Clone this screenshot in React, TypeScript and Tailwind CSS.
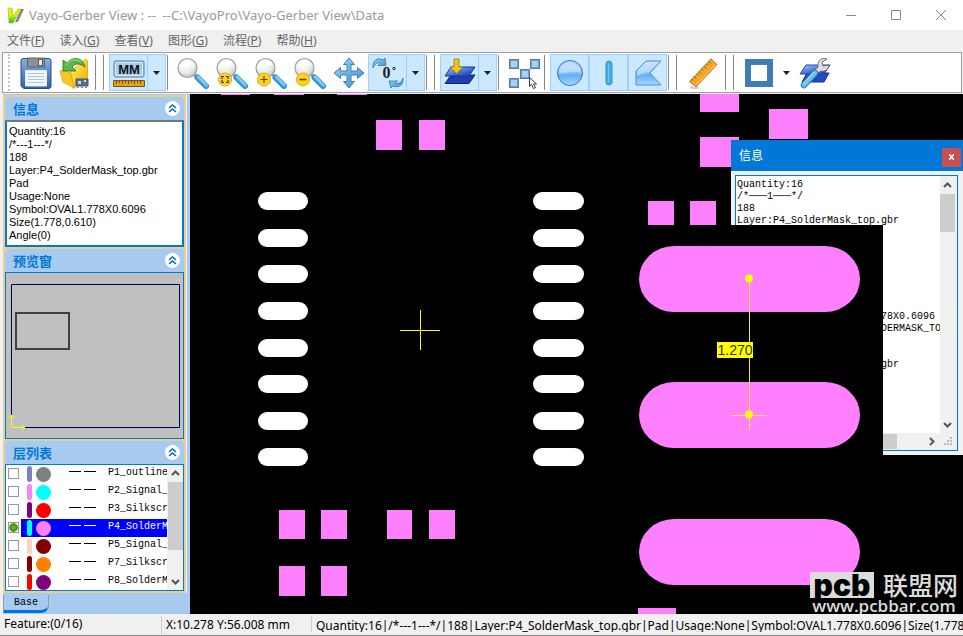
import type { ReactNode } from "react";

const menus = [
  { label: "文件", key: "F" },
  { label: "读入", key: "G" },
  { label: "查看", key: "V" },
  { label: "图形", key: "G" },
  { label: "流程", key: "P" },
  { label: "帮助", key: "H" },
];

const layers = [
  { name: "P1_outline", bar: "bg-[#8080c0]", dot: "bg-[#808080]" },
  { name: "P2_Signal_", bar: "bg-[#ff80ff]", dot: "bg-[#00ffff]" },
  { name: "P3_Silkscr", bar: "bg-[#800080]", dot: "bg-[#ff0000]" },
  { name: "P4_SolderM", bar: "bg-[#00ffff]", dot: "bg-[#ff80ff]", selected: true },
  { name: "P5_Signal_", bar: "bg-[#ffd0c4]", dot: "bg-[#800000]" },
  { name: "P7_Silkscr", bar: "bg-[#800000]", dot: "bg-[#ff8000]" },
  { name: "P8_SolderM", bar: "bg-[#ff0000]", dot: "bg-[#800080]" },
];

const featureInfo = `Quantity:16
/*---1---*/
188
Layer:P4_SolderMask_top.gbr
Pad
Usage:None
Symbol:OVAL1.778X0.6096
Size(1.778,0.610)
Angle(0)`;

const indent = " ".repeat(24);
const dialogInfo = [
  "Quantity:16",
  "/*───1───*/",
  "188",
  "Layer:P4_SolderMask_top.gbr",
  "",
  "",
  "",
  "",
  "",
  "",
  "",
  indent + "78X0.6096",
  indent + "DERMASK_TO",
  "",
  "",
  indent + "gbr",
].join("\n");

// pads on the canvas: x, y, width, height
const pads = [
  [31, 0, 29, 1],
  [84, 0, 30, 1],
  [147, 0, 30, 1],
  [186, 26, 26, 30],
  [229, 26, 26, 30],
  [89, 416, 26, 29],
  [131, 416, 26, 29],
  [197, 416, 25, 29],
  [239, 416, 26, 29],
  [89, 472, 26, 30],
  [131, 472, 26, 30],
  [458, 107, 26, 24],
  [500, 107, 26, 24],
  [510, 0, 39, 18],
  [579, 15, 39, 30],
  [510, 43, 39, 30],
];

const pinRows = [98, 135, 171, 208, 245, 281, 318, 354];

function Gradients() {
  return (
    <svg width="0" height="0" className="absolute" aria-hidden="true">
      <defs>
        <linearGradient id="steel" x1="0" y1="0" x2="0" y2="1">
          <stop offset="0" stopColor="#86b0de" />
          <stop offset="1" stopColor="#2f62a8" />
        </linearGradient>
        <linearGradient id="sky" x1="0" y1="0" x2="0" y2="1">
          <stop offset="0" stopColor="#b9dcfc" />
          <stop offset="0.45" stopColor="#8cc4fa" />
          <stop offset="0.6" stopColor="#66aff6" />
          <stop offset="1" stopColor="#a4d8ff" />
        </linearGradient>
        <linearGradient id="arrow" x1="0" y1="0" x2="1" y2="1">
          <stop offset="0" stopColor="#9cd4f4" />
          <stop offset="1" stopColor="#3d8fcb" />
        </linearGradient>
        <linearGradient id="gold" x1="0" y1="0" x2="1" y2="1">
          <stop offset="0" stopColor="#fff0a0" />
          <stop offset="0.5" stopColor="#fbd02c" />
          <stop offset="1" stopColor="#e8a80a" />
        </linearGradient>
        <linearGradient id="sheet" x1="0" y1="0" x2="1" y2="1">
          <stop offset="0" stopColor="#a8cbff" />
          <stop offset="0.6" stopColor="#3a68d4" />
          <stop offset="1" stopColor="#1b3cb0" />
        </linearGradient>
        <linearGradient id="logo" x1="0" y1="0" x2="0" y2="1">
          <stop offset="0" stopColor="#ffee00" />
          <stop offset="0.500" stopColor="#d8ea10" />
          <stop offset="1" stopColor="#10c030" />
        </linearGradient>
        <radialGradient id="lens" cx="0.4" cy="0.3" r="0.8">
          <stop offset="0" stopColor="#ffffff" />
          <stop offset="0.55" stopColor="#ececec" />
          <stop offset="1" stopColor="#b4b4b4" />
        </radialGradient>
      </defs>
    </svg>
  );
}

function Icon({ children }: { children: ReactNode }) {
  return (
    <svg width="32" height="32" viewBox="0 0 32 32" className="shrink-0" aria-hidden="true">
      {children}
    </svg>
  );
}

function SaveIcon() {
  return (
    <Icon>
      <path d="M1 3 2.500 1.500h27L31 3v27l-1.500 1.500H4L1 29Z" fill="url(#steel)" stroke="#28508a" />
      <path d="M7.500 1h17v9h-17Z" fill="#8b9096" stroke="#5d646c" />
      <path d="M18.500 2.500h4v6h-4Z" fill="#eaeaea" stroke="#444" strokeWidth="0.800" />
      <path d="M5.500 13.500h21V29h-21Z" fill="#f4faff" stroke="#dceaf8" />
      <path d="M8 16.500h16M8 19.500h16M8 22.500h16M8 25.500h16" stroke="#9cc6ec" />
    </Icon>
  );
}

function OpenIcon() {
  return (
    <Icon>
      <path d="m11 15 16-13 1.500 2v18L14 31.500Z" fill="url(#gold)" stroke="#d79b0b" strokeWidth="0.700" />
      <path d="m1 14 3-1 8 3 3 15L4 25Z" fill="#f8c81c" stroke="#d89f11" strokeWidth="0.700" />
      <path d="M4 3v11h13l-4-4c3-4 8-4 13 0C24 0 13-1 8 6Z" fill="#58b848" stroke="#24751f" strokeWidth="0.800" />
      <path d="M7 8c5-7 11-6 15-3" fill="none" stroke="#a4e08c" />
      <path d="M17 22h12v7H17Z" fill="#56718a" stroke="#44596e" />
      <path d="M19 24h3v3h-3ZM25 23h2v2h-2Z" fill="#c4d8e8" />
      <path d="M18 30.500h2m2 0h2m2 0h2" stroke="#789" />
    </Icon>
  );
}

function UnitIcon() {
  return (
    <Icon>
      <rect x="1" y="4" width="30" height="16" rx="1.500" fill="#a6caf0" stroke="#5c7ea4" />
      <rect x="2.500" y="5.500" width="27" height="13" rx="1" fill="none" stroke="#dceeff" />
      <text x="16" y="16.500" textAnchor="middle" fontFamily="Liberation Sans, sans-serif" fontWeight="700" fontSize="13" fill="#111">
        MM
      </text>
      <path d="M.5 23.500h31v6H.5Z" fill="#e2a41c" stroke="#7c5408" />
      <path d="M3.500 24v3m3-3v2m3-2v3m3-3v2m3-2v3m3-3v2m3-2v3m3-3v2m3-2v3" stroke="#6d4706" />
    </Icon>
  );
}

function MagnifierIcon({ mark }: { mark?: "fit" | "plus" | "minus" }) {
  return (
    <Icon>
      <path d="m17 17 4 4" stroke="#999" strokeWidth="3" />
      <path d="m20.500 20.500 8.500 8.500" stroke="#2f8cc8" strokeWidth="6" strokeLinecap="round" />
      <path d="m21 20 8.500 8.500" stroke="#5fbcf0" strokeWidth="3.500" strokeLinecap="round" />
      <path d="m21 19.500 8 8" stroke="#b8e4fb" strokeWidth="1" />
      <circle cx="10.500" cy="11" r="9.500" fill="url(#lens)" stroke="#a0a0a0" strokeWidth="1.200" />
      <path d="M3 11c0-9 14-11 15-2-5-2-9 3-15 2Z" fill="#fff" opacity="0.800" />
      {mark && <circle cx="9" cy="22.500" r="6.500" fill="#ffd21c" stroke="#e0ac10" />}
      {mark === "fit" && <path d="M6 22v-2.500h2m2 0h2V22m0 1v2.500h-2m-2 0H6V23" fill="none" stroke="#3f3000" strokeWidth="1.200" />}
      {mark === "plus" && <path d="M5.500 22.500h7M9 19v7" stroke="#5d4a09" strokeWidth="1.200" />}
      {mark === "minus" && <path d="M5.500 22.500h7" stroke="#5d4a09" strokeWidth="1.600" />}
    </Icon>
  );
}

function MoveIcon() {
  return (
    <Icon>
      <path
        d="m16 1 5.500 6.500h-3.500V14h6.500v-3.500L31 16l-6.500 5.500V18H18v6.500h3.500L16 31l-5.500-6.500H14V18H7.500v3.500L1 16l6.500-5.500V14H14V7.500h-3.500Z"
        fill="url(#arrow)"
        stroke="#3f7fb4"
      />
    </Icon>
  );
}

function RotateIcon() {
  return (
    <Icon>
      <path d="M1 11C0 3 6 0 11 3l2-2 1 7.500H6L8.500 6C5 5 3 7 1 11Z" fill="url(#arrow)" stroke="#3a78ac" strokeWidth="0.800" />
      <path d="M31 21c1 8-5 10-10 8l-2 2-2-7h8.500L23 26c4 1 6 0 8-5Z" fill="url(#arrow)" stroke="#3a78ac" strokeWidth="0.800" />
      <text x="10.500" y="21" fontFamily="Liberation Serif, serif" fontWeight="700" fontSize="16" fill="#222">
        0
      </text>
      <circle cx="22" cy="11.500" r="1.200" fill="none" stroke="#222" />
    </Icon>
  );
}

function LayersIcon() {
  return (
    <Icon>
      <path d="M7 18h24l-6 8.500H1Z" fill="#1f3fae" stroke="#0f2680" />
      <path d="M7 10h24l-6 9H1Z" fill="url(#sheet)" stroke="#183693" />
      <path d="M10 2h5v8h4l-6.500 6.500L6 10h4Z" fill="#f7c31b" stroke="#a57400" strokeWidth="0.800" />
    </Icon>
  );
}

function SelectIcon() {
  return (
    <Icon>
      {[
        [1, 2],
        [22, 2],
        [12, 12],
        [1, 21],
      ].map(([x, y]) => (
        <g key={`${x}-${y}`}>
          <rect x={x + 0.5} y={y + 0.5} width="9" height="9" fill="#6f9ccb" stroke="#5b7b9e" />
          <rect x={x + 2} y={y + 2} width="6" height="6" fill="#a8d0f6" />
        </g>
      ))}
      <path d="M21.500 20.500v9l2-2 2 4 2-1-2-3.500h3Z" fill="#fff" stroke="#222" strokeWidth="0.900" />
    </Icon>
  );
}

function CircleIcon() {
  return (
    <Icon>
      <circle cx="16" cy="16" r="12.500" fill="url(#sky)" stroke="#3476c0" />
      <path d="M5 16C5 2 27 2 27 16c-7-3-14 1-22 0Z" fill="#d4eaff" opacity="0.600" />
    </Icon>
  );
}

function LineIcon() {
  return (
    <Icon>
      <rect x="13" y="4" width="6" height="24" rx="3" fill="#46abe2" stroke="#3090c8" />
      <path d="M15.500 7v18" stroke="#78c8f0" />
    </Icon>
  );
}

function SurfaceIcon() {
  return (
    <Icon>
      <path d="M14 4h15L18 16l11 12H4V14Z" fill="url(#sky)" stroke="#4b8fd8" />
      <path d="M14 5h13L17 15c-5 0-8 3-12 4v-5Z" fill="#d4eaff" opacity="0.600" />
    </Icon>
  );
}

function RulerIcon() {
  return (
    <Icon>
      <path d="m3 30 4 1.500 5-1" fill="none" stroke="#ccc" strokeWidth="2" />
      <path d="M24 2 30 7.500 9 30 2.500 24.500Z" fill="#f6a72c" stroke="#b8741a" />
      <path d="m22 4.500 2 2m-4.500.5 1.500 1.500m-4 1 2 2m-4.500.5 1.500 1.500m-4 1 2 2m-4.500.5 1.500 1.500m-4 1 2 2m-4.500.5 1.500 1.500" stroke="#8a5410" />
      <path d="M28.500 8 9 28.500" stroke="#ffcf72" />
    </Icon>
  );
}

function FrameIcon() {
  return (
    <svg width="28" height="28" viewBox="0 0 28 28" className="shrink-0" aria-hidden="true">
      <path d="M3 3h22v22H3Z" fill="#fff" stroke="#427cb5" strokeWidth="6" />
    </svg>
  );
}

function LayerSetupIcon() {
  return (
    <Icon>
      <path d="M8 16h22l-5 9H3Z" fill="#234bc0" stroke="#132f8c" />
      <path d="M7 8h24l-6 9H1Z" fill="url(#sheet)" stroke="#2446a4" />
      <path d="M19 10c-1-7 4-10 9-8l-5 3 1 4 6-1c-1 5-4 7-8 6l-3 2-3-3Z" fill="#dedede" stroke="#666" strokeWidth="0.900" />
      <path d="M16 16 5 28" stroke="#2a7cae" strokeWidth="6.500" strokeLinecap="round" />
      <path d="M16 16 5 28" stroke="#6cc3ea" strokeWidth="4.500" strokeLinecap="round" />
      <path d="M15 15 4 27" stroke="#bde8fa" />
    </Icon>
  );
}

function ToolButton({ label, active, wide, children }: { label: string; active?: boolean; wide?: boolean; children: ReactNode }) {
  return (
    <button
      type="button"
      aria-label={label}
      className={`flex h-[37px] shrink-0 items-center justify-center ${wide ? "w-[42px]" : "w-[39px]"} ${
        active ? "border border-[#99d1ff] bg-[#cce8ff]" : ""
      }`}
    >
      {children}
    </button>
  );
}

function DropButton({ label, active }: { label: string; active?: boolean }) {
  return (
    <button
      type="button"
      aria-label={label}
      className={`flex h-[37px] shrink-0 items-center justify-center ${
        active ? "w-[18px] border border-l-0 border-[#99d1ff] bg-[#cce8ff]" : "w-[17px]"
      }`}
    >
      <svg width="7" height="4" viewBox="0 0 7 4" aria-hidden="true">
        <path d="M0 0h7L3.500 4Z" fill="#222" />
      </svg>
    </button>
  );
}

function Separator({ double }: { double?: boolean }) {
  return (
    <div
      className={`ml-px mr-[5px] h-[35px] shrink-0 border-[#868686] ${double ? "w-[9px] border-x" : "w-px border-l"}`}
    />
  );
}

function Toolbar() {
  return (
    <div className="mx-[2px] mb-px mr-px flex h-[41px] shrink-0 items-center overflow-hidden border border-[#a0a0a0] bg-white">
      <div className="ml-[5px] mr-[6px] h-[37px] border-l-2 border-dotted border-[#c4c4c4]" />
      <ToolButton label="Save"><SaveIcon /></ToolButton>
      <ToolButton label="Open"><OpenIcon /></ToolButton>
      <Separator double />
      <ToolButton label="Units" active><UnitIcon /></ToolButton>
      <DropButton label="Choose units" active />
      <Separator />
      <ToolButton label="Zoom"><MagnifierIcon /></ToolButton>
      <ToolButton label="Zoom to fit"><MagnifierIcon mark="fit" /></ToolButton>
      <ToolButton label="Zoom in"><MagnifierIcon mark="plus" /></ToolButton>
      <ToolButton label="Zoom out"><MagnifierIcon mark="minus" /></ToolButton>
      <ToolButton label="Pan"><MoveIcon /></ToolButton>
      <ToolButton label="Rotate" active><RotateIcon /></ToolButton>
      <DropButton label="Choose angle" active />
      <Separator double />
      <ToolButton label="Layers" active><LayersIcon /></ToolButton>
      <DropButton label="Choose layers" active />
      <Separator />
      <ToolButton label="Select"><SelectIcon /></ToolButton>
      <Separator />
      <ToolButton label="Pads" active><CircleIcon /></ToolButton>
      <ToolButton label="Lines" active><LineIcon /></ToolButton>
      <ToolButton label="Surfaces" active><SurfaceIcon /></ToolButton>
      <Separator double />
      <ToolButton label="Measure" wide><RulerIcon /></ToolButton>
      <Separator double />
      <ToolButton label="Frame"><FrameIcon /></ToolButton>
      <DropButton label="Choose frame" />
      <ToolButton label="Layer settings"><LayerSetupIcon /></ToolButton>
    </div>
  );
}

function Panel({ title, grow, children }: { title: string; grow?: boolean; children: ReactNode }) {
  return (
    <section className={`flex flex-col ${grow ? "min-h-0 flex-1" : "shrink-0"}`}>
      <header className="flex h-[23px] shrink-0 items-center justify-between rounded-t bg-[#a6caf0] pl-2 pr-1">
        <h2 className="text-[13px] font-bold leading-5 text-[#0078d7]">{title}</h2>
        <button type="button" aria-label={`${title} ▲`} className="flex size-[15px] items-center justify-center rounded-full bg-white">
          <svg width="9" height="9" viewBox="0 0 9 9" fill="none" stroke="#0068b8" strokeWidth="1.500" aria-hidden="true">
            <path d="m1 4 3.500-3L8 4M1 8l3.500-3L8 8" />
          </svg>
        </button>
      </header>
      {children}
    </section>
  );
}

function Chevron({ dir }: { dir: "up" | "down" | "right" }) {
  const d = { up: "m1 6 3.500-3.500L8 6", down: "m1 3 3.500 3.500L8 3", right: "m3 1 3.500 3.500L3 8" }[dir];
  return (
    <svg width="9" height="9" viewBox="0 0 9 9" fill="none" stroke="#555" strokeWidth="2" aria-hidden="true">
      <path d={d} />
    </svg>
  );
}

function Sidebar() {
  return (
    <aside className="flex w-[190px] shrink-0 flex-col border-l-[3px] border-[#f0f0f0] bg-[#a6caf0]">
      <div className="mr-[3px] mt-px flex min-h-0 flex-1 flex-col gap-[2px] border-r border-[#f0f0f0] bg-[#e8d08c] p-[2px]">
        <Panel title="信息">
          <textarea
            readOnly
            aria-label="信息"
            value={featureInfo}
            wrap="off"
            className="h-[127px] w-full resize-none overflow-hidden border-2 border-[#0078d7] border-t-[#777] bg-white px-[2px] py-[3px] font-['Liberation_Sans',sans-serif] text-[11px] leading-[13px] text-black"
          />
        </Panel>
        <Panel title="预览窗" grow>
          <div className="min-h-0 flex-1 border border-[#0078d7] bg-[#c0c0c0]">
            <svg width="100%" height="100%" aria-hidden="true">
              <path d="M5.500 11.500h168v143h-168Z" fill="none" stroke="#000060" />
              <path d="M10 40h53v36H10Z" fill="none" stroke="#404040" strokeWidth="2" />
              <path d="M5.500 142v12.500h13M2.500 145l3-3 3 3M16 152l3 2.500-3 2.500" fill="none" stroke="#ff0" />
            </svg>
          </div>
        </Panel>
        <Panel title="层列表">
          <div className="flex h-[127px] overflow-hidden border border-[#0078d7] bg-white">
            <ul className="min-w-0 flex-1 font-['Liberation_Mono',monospace] text-[10px]">
              {layers.map((layer) => (
                <li key={layer.name} className="flex h-[18px]">
                  <input
                    type="checkbox"
                    id={layer.name}
                    defaultChecked={layer.selected}
                    className="ml-[2px] mr-[2px] mt-[3px] size-[11px] shrink-0 appearance-none border border-[#999] bg-white checked:bg-[radial-gradient(circle,#6cb51c_20%,#3d8a0a_60%,#ffffff_75%)]"
                  />
                  <label
                    htmlFor={layer.name}
                    className={`flex min-w-0 flex-1 items-start overflow-hidden ${
                      layer.selected ? "bg-[#0000ff] text-white" : "text-black"
                    }`}
                  >
                    <span className={`ml-[6px] mt-px h-4 w-[5px] shrink-0 rounded-sm ${layer.bar}`} />
                    <span className={`ml-1 mt-[2px] size-[15px] shrink-0 rounded-full ${layer.dot}`} />
                    <span className="ml-[18px] mt-[6px] w-3 shrink-0 border-t border-current" />
                    <span className="ml-[3px] mt-[6px] w-3 shrink-0 border-t border-current" />
                    <span className="ml-3 whitespace-nowrap leading-[15px]">{layer.name}</span>
                  </label>
                </li>
              ))}
            </ul>
            <div className="flex w-4 shrink-0 flex-col items-center bg-[#f0f0f0]">
              <button type="button" aria-label="Scroll up" className="flex h-[17px] w-full items-center justify-center">
                <Chevron dir="up" />
              </button>
              <div className="h-[68px] w-[15px] bg-[#cdcdcd]" />
              <button type="button" aria-label="Scroll down" className="mt-auto flex h-[17px] w-full items-center justify-center">
                <Chevron dir="down" />
              </button>
            </div>
          </div>
        </Panel>
      </div>
      <div className="flex h-[21px] shrink-0 items-start">
        <button
          type="button"
          className="mt-[2px] h-[18px] w-[46px] rounded-br-lg border-b-[3px] border-l border-r border-b-[#0078d7] border-l-[#999] border-r-[#999] font-['Liberation_Mono',monospace] text-[10px] leading-[15px] text-black"
        >
          Base
        </button>
      </div>
    </aside>
  );
}

function InfoDialog() {
  return (
    <div role="dialog" aria-label="信息" className="absolute left-[541px] top-[46px] flex h-[315px] w-[232px] flex-col bg-[#f0f0f0]">
      <div className="flex h-[31px] shrink-0 items-center justify-between bg-[#0078d7] pl-2 pr-[2px]">
        <span className="text-xs text-white">信息</span>
        <button type="button" aria-label="关闭" className="mt-[3px] flex h-[19px] w-[19px] items-center justify-center bg-[#c75050]">
          <svg width="5" height="6" viewBox="0 0 5 6" stroke="#fff" strokeWidth="1.500" aria-hidden="true">
            <path d="m0 0 5 6M5 0 0 6" />
          </svg>
        </button>
      </div>
      <div className="m-1 mr-[5px] flex min-h-0 flex-1 flex-col border border-[#0078d7] bg-[#f0f0f0]">
        <div className="flex min-h-0 flex-1">
          <textarea
            readOnly
            aria-label="信息"
            value={dialogInfo}
            wrap="off"
            className="min-w-0 flex-1 resize-none overflow-hidden bg-white px-px py-[3px] font-['Liberation_Mono',monospace] text-[10px] leading-3 text-black"
          />
          <div className="mr-[2px] flex w-[15px] flex-col pt-px">
            <button type="button" aria-label="Scroll up" className="flex h-[17px] w-full items-center justify-center">
              <Chevron dir="up" />
            </button>
            <div className="h-[38px] bg-[#cdcdcd]" />
            <button type="button" aria-label="Scroll down" className="mt-auto flex h-[17px] w-full items-center justify-center">
              <Chevron dir="down" />
            </button>
          </div>
        </div>
        <div className="flex h-[17px] shrink-0 items-center">
          <div className="h-[15px] w-[161px] bg-[#cdcdcd]" />
          <button type="button" aria-label="Scroll right" className="ml-auto mr-[5px] flex h-[15px] w-[15px] items-center justify-center">
            <Chevron dir="right" />
          </button>
          <svg width="9" height="9" viewBox="0 0 9 9" fill="#bbb" className="mr-1 shrink-0" aria-hidden="true">
            <path d="M6 0h2v2H6zM3 3h2v2H3zM6 3h2v2H6zM0 6h2v2H0zM3 6h2v2H3zM6 6h2v2H6z" />
          </svg>
        </div>
      </div>
    </div>
  );
}

function Canvas() {
  return (
    <main className="relative min-w-0 flex-1 overflow-hidden bg-black">
      <svg className="absolute inset-0 size-full" aria-hidden="true">
        {pads.map(([x, y, w, h]) => (
          <rect key={`${x}-${y}`} x={x} y={y} width={w} height={h} fill="#ff80ff" />
        ))}
        {pinRows.map((y) => (
          <g key={y} fill="#fff">
            <rect x="68" y={y} width="50" height="18" rx="9" />
            <rect x="343" y={y} width="51" height="18" rx="9" />
          </g>
        ))}
        <path d="M210 236.500h40M230.500 216v40" stroke="#ffff00" />
      </svg>

      <InfoDialog />

      {/* Measurement view, lies over the dialog */}
      <svg className="absolute left-[412px] top-[131px] h-[389px] w-[281px] bg-black" aria-hidden="true">
        <rect x="36" y="383" width="38" height="6" fill="#ff80ff" />
        {[21, 157, 294].map((y) => (
          <rect key={y} x="37" y={y} width="221" height="66" rx="35" ry="33" fill="#ff80ff" />
        ))}
        <path d="M147.500 53v152M129 190.500h36" stroke="#ffe040" />
        <circle cx="147" cy="53.500" r="4" fill="#ff0" />
        <circle cx="147" cy="189.500" r="4" fill="#ff0" />
        <rect x="115" y="117" width="36" height="16" fill="#ff0" />
        <text x="133" y="130" textAnchor="middle" fontFamily="Liberation Sans, sans-serif" fontSize="14" fill="#333300">
          1.270
        </text>
      </svg>

      {/* Site mark */}
      <div className="absolute bottom-0 right-[5px] w-[148px] text-[#dcdcdc]">
        <div className="flex h-[26px] items-start justify-between">
          <span className="flex h-[26px] w-16 items-center justify-center overflow-hidden bg-[#dcdcdc] font-['Inter',sans-serif] text-3xl font-black leading-[26px] text-black">
            pcb
          </span>
          <span className="text-[25px] font-medium leading-[26px]">联盟网</span>
        </div>
        <div className="whitespace-nowrap text-center font-['Open_Sans',sans-serif] text-[17px] font-semibold leading-4">www.pcbbar.com</div>
      </div>
    </main>
  );
}

export default function App() {
  return (
    <div className="flex h-screen flex-col overflow-hidden bg-[#f0f0f0] font-['Noto_Sans','Noto_Sans_CJK_SC',sans-serif]">
      <Gradients />

      {/* Title bar */}
      <header className="flex h-[30px] shrink-0 items-center bg-white pl-[7px]">
        <svg width="17" height="17" viewBox="0 0 17 17" aria-hidden="true">
          <path d="M8 15 14 2h3l-6 13Z" fill="#888" />
          <path d="M1 1h4l1 8 5-7h3L6 16H2Z" fill="url(#logo)" stroke="#9fc022" strokeWidth="0.600" />
        </svg>
        <h1 className="ml-[5px] flex-1 whitespace-pre text-[13px] leading-5 text-[#999]">
          {"Vayo-Gerber View : --  --C:\\VayoPro\\Vayo-Gerber View\\Data"}
        </h1>
        {[
          { label: "Minimize", d: "M0 5.500h10" },
          { label: "Maximize", d: "M.5.5h9v9h-9Z" },
          { label: "Close", d: "m0 0 10 10M10 0 0 10" },
        ].map((b) => (
          <button key={b.label} type="button" aria-label={b.label} className="flex h-7 w-[45px] items-center justify-center">
            <svg width="10" height="10" viewBox="0 0 10 10" fill="none" stroke="#888" aria-hidden="true">
              <path d={b.d} />
            </svg>
          </button>
        ))}
      </header>

      {/* Menu */}
      <nav className="flex h-[22px] shrink-0 items-center gap-[15px] pl-[7px] text-xs text-[#666]">
        {menus.map((m) => (
          <button key={m.label} type="button" className="whitespace-nowrap">
            {m.label}(<u>{m.key}</u>)
          </button>
        ))}
      </nav>

      <Toolbar />

      <div className="flex min-h-0 flex-1">
        <Sidebar />
        <Canvas />
      </div>

      {/* Status bar */}
      <footer className="flex h-[22px] shrink-0 items-start border-b border-[#888] text-xs leading-5 text-black">
        <span className="w-[161px] shrink-0 pl-1">Feature:(0/16)</span>
        <span className="my-[2px] w-[150px] shrink-0 border-l border-[#d0d0d0] pl-1 leading-[18px]">X:10.278 Y:56.008 mm</span>
        <span className="mt-[2px] h-4 min-w-0 flex-1 overflow-hidden whitespace-nowrap border-l border-[#d0d0d0] pl-1">
          Quantity:16|/*---1---*/|188|Layer:P4_SolderMask_top.gbr|Pad|Usage:None|Symbol:OVAL1.778X0.6096|Size(1.778,
        </span>
      </footer>
    </div>
  );
}
